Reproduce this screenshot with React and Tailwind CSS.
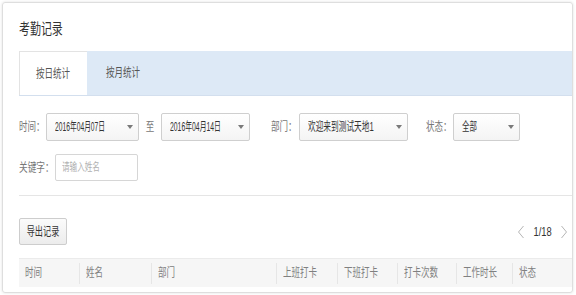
import React from "react";

const S = ({ className = "", children }) => (
  <span className={"inline-block whitespace-nowrap " + className}>{children}</span>
);

const Arrow = () => (
  <svg width="6" height="4" viewBox="0 0 6 4" className="shrink-0">
    <path d="M0 0 L6 0 L3 4 Z" fill="#7a7a7a" />
  </svg>
);

const Select = ({ width, label, scale }) => (
  <div
    className={
      "flex items-center h-[28px] border border-[#cfcfcf] rounded-[2px] bg-linear-to-b from-white to-[#f4f4f4] pl-[8px] pr-[5px] overflow-hidden " +
      width
    }
  >
    <div className="flex-1 min-w-0">
      <S className={"text-[12px] text-[#333] origin-left " + scale}>{label}</S>
    </div>
    <Arrow />
  </div>
);

const columns = [
  { name: "时间", w: "w-[61px]" },
  { name: "姓名", w: "w-[72px]" },
  { name: "部门", w: "w-[125px]" },
  { name: "上班打卡", w: "w-[61px]" },
  { name: "下班打卡", w: "w-[60px]" },
  { name: "打卡次数", w: "w-[59px]" },
  { name: "工作时长", w: "w-[56px]" },
  { name: "状态", w: "flex-1" },
];

const App = () => {
  return (
    <div className="w-[576px] h-[295px] bg-white pt-[2px] pl-[2px] font-['Liberation_Sans','Noto_Sans_CJK_SC',sans-serif] overflow-hidden">
      <div className="w-[571px] h-[291px] border border-[#dedede] rounded-[3px] shadow-[0_0_3px_rgba(0,0,0,0.12)] pl-[16px] overflow-hidden">
        {/* Title */}
        <div className="h-[48px] pt-[17px] leading-[18px] text-[15px] text-[#333]">
          <S className="origin-left scale-x-[0.73]">考勤记录</S>
        </div>

        {/* Tabs */}
        <div className="flex h-[45px] bg-[#dde9f6] border-b border-[#d3dfee]">
          <div className="w-[68px] bg-white border-l border-t border-[#e3e3e3] flex items-center justify-center text-[12px] text-[#555]">
            <S className="scale-x-[0.71]">按日统计</S>
          </div>
          <div className="w-[72px] flex items-center justify-center text-[12px] text-[#555]">
            <S className="scale-x-[0.71]">按月统计</S>
          </div>
        </div>

        {/* Filter row */}
        <div className="mt-[17px] flex items-center h-[28px] text-[12px] text-[#777]">
          <div className="w-[27px]">
            <S className="origin-left scale-x-[0.71]">时间：</S>
          </div>
          <Select width="w-[93px]" label="2016年04月07日" scale="scale-x-[0.56]" />
          <div className="w-[22px] flex justify-center">
            <S className="scale-x-[0.71]">至</S>
          </div>
          <Select width="w-[89px]" label="2016年04月14日" scale="scale-x-[0.57]" />
          <div className="w-[49px] pl-[21px]">
            <S className="origin-left scale-x-[0.71]">部门：</S>
          </div>
          <Select width="w-[109px]" label="欢迎来到测试天地1" scale="scale-x-[0.64]" />
          <div className="w-[45px] pl-[18px]">
            <S className="origin-left scale-x-[0.71]">状态：</S>
          </div>
          <Select width="w-[67px]" label="全部" scale="scale-x-[0.62]" />
        </div>

        {/* Keyword row */}
        <div className="mt-[13px] flex items-center h-[27px] text-[12px] text-[#777]">
          <div className="w-[36px]">
            <S className="origin-left scale-x-[0.72]">关键字：</S>
          </div>
          <div className="w-[83px] h-[27px] border border-[#d6d6d6] rounded-[2px] bg-white flex items-center pl-[6px] overflow-hidden">
            <S className="origin-left scale-x-[0.69] text-[11px] text-[#b0b0b0]">请输入姓名</S>
          </div>
        </div>

        <div className="mt-[14px] h-px bg-[#e5e5e5]" />

        {/* Toolbar */}
        <div className="mt-[22px] h-[27px] flex items-center justify-between pr-[4px]">
          <div className="w-[48px] h-[27px] border border-[#cdcdcd] rounded-[2px] bg-linear-to-b from-[#fbfbfb] to-[#ececec] flex items-center justify-center text-[12px] text-[#333]">
            <S className="scale-x-[0.68]">导出记录</S>
          </div>
          <div className="flex items-center">
            <svg width="8" height="14" viewBox="0 0 8 14">
              <path d="M6.5 1 L1.5 7 L6.5 13" fill="none" stroke="#b5b5b5" strokeWidth="1" />
            </svg>
            <div className="w-[35px] flex justify-center text-[13px] text-[#333]">
              <S className="scale-x-[0.72]">1/18</S>
            </div>
            <svg width="8" height="14" viewBox="0 0 8 14">
              <path d="M1.5 1 L6.5 7 L1.5 13" fill="none" stroke="#b5b5b5" strokeWidth="1" />
            </svg>
          </div>
        </div>

        {/* Table header */}
        <div className="mt-[13px] h-[29px] bg-[#f6f6f6] border-t border-[#ebebeb] flex items-center text-[12px] text-[#808080]">
          {columns.map((c, i) => (
            <div
              key={c.name}
              className={
                "h-[21px] flex items-center pl-[6px] " +
                c.w +
                (i < columns.length - 1 ? " border-r border-[#e6e6e6]" : "")
              }
            >
              <S className="origin-left scale-x-[0.71]">{c.name}</S>
            </div>
          ))}
        </div>
      </div>
    </div>
  );
};

export default App;
